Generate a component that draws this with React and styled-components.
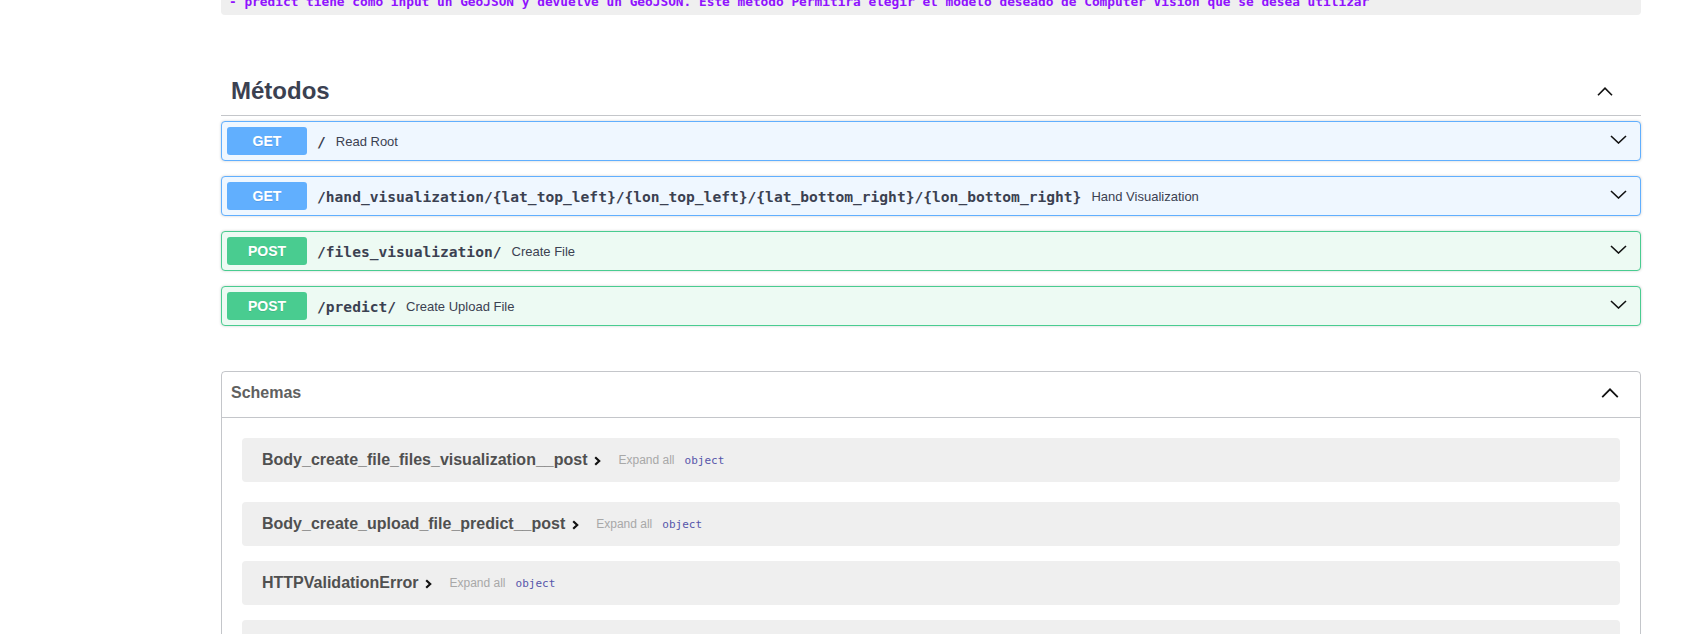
import React from 'react';
import styled, { createGlobalStyle } from 'styled-components';

const COLORS = {
  text: '#3b4151',
  get: '#61affe',
  getBg: '#eff7ff',
  post: '#49cc90',
  postBg: '#edfaf3',
  line: 'rgba(59, 65, 81, 0.3)',
  purple: '#9012fe',
  model: '#efefef',
};

const GlobalStyle = createGlobalStyle`
  html, body {
    margin: 0;
    padding: 0;
    background: #fff;
    overflow: hidden;
  }
  body {
    font-family: "Liberation Sans", Arial, sans-serif;
    color: ${COLORS.text};
  }
  * { box-sizing: border-box; }
`;

const Wrapper = styled.div`
  width: 1420px;
  margin-left: 221px;
`;

const CodeBlock = styled.pre`
  margin: -13px 0 0;
  padding: 6px 7px 4px 8px;
  background: ${COLORS.model};
  border-radius: 4px;
  font-family: "DejaVu Sans Mono", "Liberation Mono", monospace;
  font-size: 12.8px;
  line-height: 18px;
  font-weight: 600;
  color: ${COLORS.purple};
  white-space: pre;
  overflow: hidden;
`;

const TagSection = styled.section`
  margin-top: 52px;
`;

const TagHeader = styled.div`
  display: flex;
  align-items: center;
  justify-content: space-between;
  padding: 10px 28px 10px 10px;
  border-bottom: 1px solid ${COLORS.line};
  margin-bottom: 5px;
`;

const TagTitle = styled.h3`
  margin: 0;
  font-size: 24px;
  line-height: 28px;
  font-weight: 700;
  color: ${COLORS.text};
`;

const Chevron = styled.svg`
  display: block;
  flex-shrink: 0;
  margin-bottom: ${(p) => p.$lift || 0}px;
`;

const OpBlock = styled.div`
  display: flex;
  align-items: center;
  height: 40px;
  padding: 5px 13px 5px 5px;
  margin-bottom: 15px;
  border: 1px solid ${(p) => (p.$method === 'GET' ? COLORS.get : COLORS.post)};
  background: ${(p) => (p.$method === 'GET' ? COLORS.getBg : COLORS.postBg)};
  border-radius: 4px;
  box-shadow: 0 0 3px rgba(0, 0, 0, 0.19);
`;

const Method = styled.span`
  width: 80px;
  height: 28px;
  flex-shrink: 0;
  display: flex;
  align-items: center;
  justify-content: center;
  border-radius: 3px;
  background: ${(p) => (p.$method === 'GET' ? COLORS.get : COLORS.post)};
  color: #fff;
  font-size: 14px;
  font-weight: 700;
  text-shadow: 0 1px 0 rgba(0, 0, 0, 0.1);
`;

const Path = styled.span`
  padding: 0 10px;
  font-family: "DejaVu Sans Mono", "Liberation Mono", monospace;
  font-size: 14.6px;
  font-weight: 700;
  color: ${COLORS.text};
`;

const Summary = styled.span`
  flex: 1;
  font-size: 13px;
  color: ${COLORS.text};
`;

const Models = styled.section`
  margin-top: 45px;
  border: 1px solid ${COLORS.line};
  border-radius: 4px;
  height: 300px;
  overflow: hidden;
`;

const ModelsHeader = styled.div`
  display: flex;
  align-items: center;
  justify-content: space-between;
  height: 46px;
  padding: 0 21px 4px 9px;
  border-bottom: 1px solid ${COLORS.line};
`;

const ModelsTitle = styled.h4`
  margin: 0;
  font-size: 16px;
  font-weight: 700;
  color: #606060;
`;

const ModelList = styled.div`
  padding-top: 20px;
`;

const ModelBox = styled.div`
  display: flex;
  align-items: center;
  height: 44px;
  margin: 0 20px ${(p) => (p.$first ? 20 : 15)}px;
  padding: 0 20px;
  background: ${COLORS.model};
  border-radius: 4px;
`;

const ModelTitle = styled.span`
  font-size: 16px;
  font-weight: 700;
  color: #505050;
`;

const Toggle = styled.svg`
  display: block;
  margin: 2px 17px 0 7px;
`;

const ExpandAll = styled.span`
  font-size: 12px;
  color: #a8a8a8;
`;

const PropType = styled.span`
  margin-left: 10px;
  font-family: "DejaVu Sans Mono", "Liberation Mono", monospace;
  font-size: 11px;
  color: #55a;
`;

const ArrowUp = ({ w = 16, h = 9 }) => (
  <Chevron width={w} height={h} viewBox="0 0 16 9">
    <polyline points="1,8.2 8,1.2 15,8.2" fill="none" stroke="#111" strokeWidth="1.6" />
  </Chevron>
);

const ArrowDown = () => (
  <Chevron width="17" height="9" viewBox="0 0 17 9" $lift={3}>
    <polyline points="1,1 8.5,8 16,1" fill="none" stroke="#111" strokeWidth="1.6" />
  </Chevron>
);

const operations = [
  { method: 'GET', path: '/', summary: 'Read Root' },
  {
    method: 'GET',
    path: '/hand_visualization/{lat_top_left}/{lon_top_left}/{lat_bottom_right}/{lon_bottom_right}',
    summary: 'Hand Visualization',
  },
  { method: 'POST', path: '/files_visualization/', summary: 'Create File' },
  { method: 'POST', path: '/predict/', summary: 'Create Upload File' },
];

const schemas = [
  'Body_create_file_files_visualization__post',
  'Body_create_upload_file_predict__post',
  'HTTPValidationError',
  'ValidationError',
];

const App = () => {
  return (
    <>
      <GlobalStyle />
      <Wrapper>
        <CodeBlock>
          - predict tiene como input un GeoJSON y devuelve un GeoJSON. Este método Permitirá elegir el modelo deseado de Computer Vision que se desea utilizar
        </CodeBlock>

        <TagSection>
          <TagHeader>
            <TagTitle>Métodos</TagTitle>
            <ArrowUp />
          </TagHeader>
          {operations.map((op) => (
            <OpBlock key={op.path} $method={op.method}>
              <Method $method={op.method}>{op.method}</Method>
              <Path>{op.path}</Path>
              <Summary>{op.summary}</Summary>
              <ArrowDown />
            </OpBlock>
          ))}
        </TagSection>

        <Models>
          <ModelsHeader>
            <ModelsTitle>Schemas</ModelsTitle>
            <ArrowUp w={18} h={10} />
          </ModelsHeader>
          <ModelList>
            {schemas.map((name, i) => (
              <ModelBox key={name} $first={i === 0}>
                <ModelTitle>{name}</ModelTitle>
                <Toggle width="7" height="10" viewBox="0 0 7 10">
                  <polyline points="1.2,1.2 5.2,5 1.2,8.8" fill="none" stroke="#111" strokeWidth="2.2" />
                </Toggle>
                <ExpandAll>Expand all</ExpandAll>
                <PropType>object</PropType>
              </ModelBox>
            ))}
          </ModelList>
        </Models>
      </Wrapper>
    </>
  );
};

export default App;
